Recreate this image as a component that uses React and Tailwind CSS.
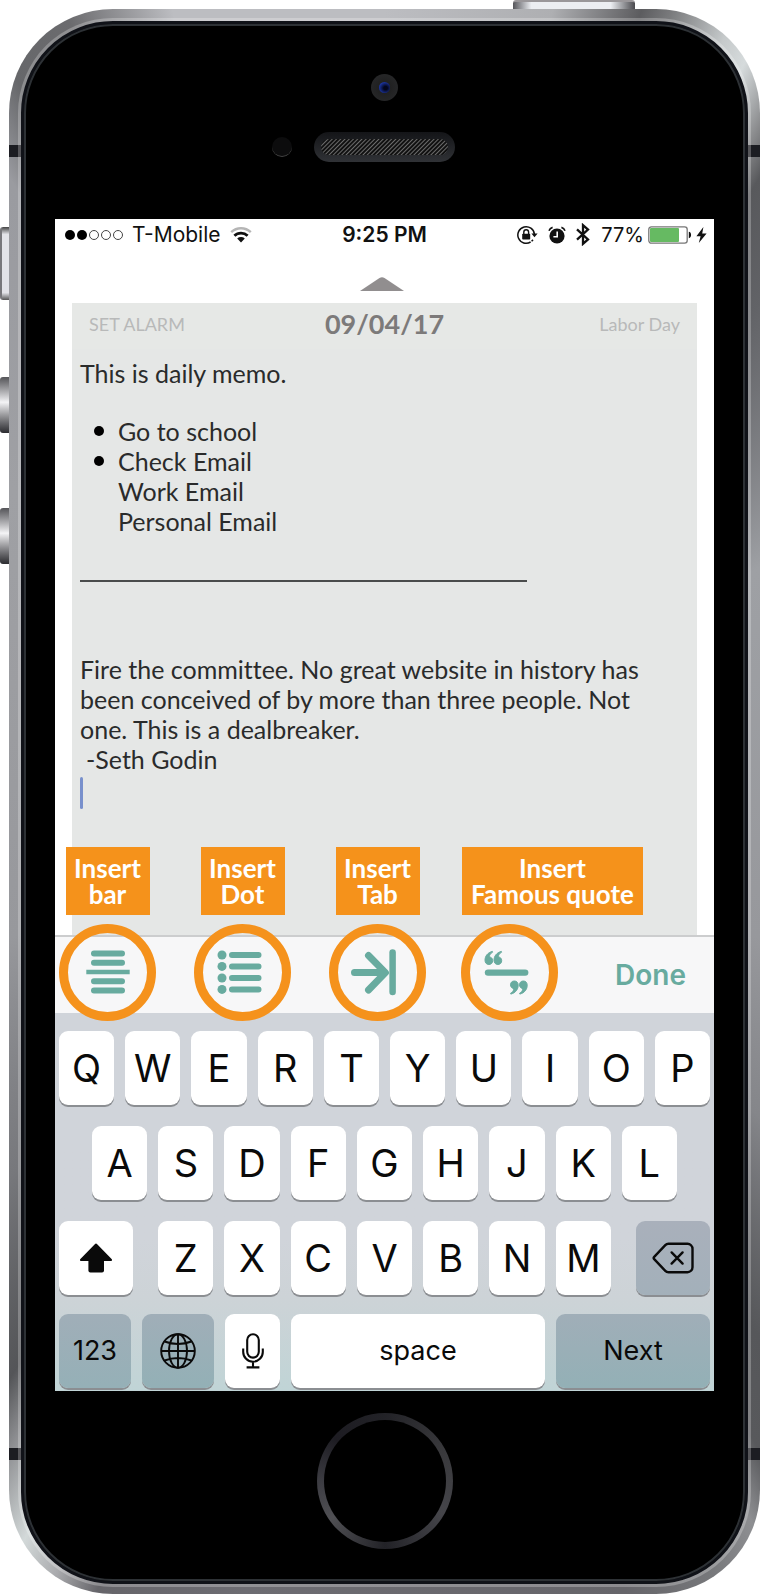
import React from "react";

const svgBase = { fill: "none", stroke: "currentColor", "aria-hidden": true };

function WifiIcon() {
  return (
    <svg {...svgBase} viewBox="0 0 22 17" className="h-[17px] w-[22px]" strokeWidth="2.4">
      <path d="M1.2 6.2a14 14 0 0 1 19.6 0" stroke="#b5b5b5" />
      <path d="M4.4 9.8a9.4 9.4 0 0 1 13.2 0" strokeWidth="2.8" />
      <path d="M7.2 12.4a5.6 5.6 0 0 1 7.6 0L11 16.6z" fill="currentColor" stroke="none" />
    </svg>
  );
}

function RotationLockIcon() {
  return (
    <svg {...svgBase} viewBox="0 0 21 20" className="h-[20px] w-[21px]">
      <path d="M17.4 9.2A8.3 8.3 0 1 0 13.6 17" strokeWidth="1.5" />
      <path d="M14.6 16.3l1.4-1.4" strokeWidth="1.5" />
      <path d="M14.4 8.6h6.2l-3.1 3.6z" fill="currentColor" stroke="none" />
      <rect x="5.2" y="8.8" width="8" height="5.8" rx=".8" fill="currentColor" stroke="none" />
      <path d="M6.8 9V7.2a2.4 2.4 0 0 1 4.8 0V9" strokeWidth="1.4" />
    </svg>
  );
}

function AlarmIcon() {
  return (
    <svg {...svgBase} viewBox="0 0 18 18" className="h-[18px] w-[18px]">
      <circle cx="9" cy="10" r="7.6" fill="currentColor" stroke="none" />
      <path d="M9.2 5.6v5.2H5.4" stroke="#fff" strokeWidth="1.6" />
      <path d="M1 4.8A5 5 0 0 1 4.6 1.4M17 4.8a5 5 0 0 0-3.6-3.4" strokeWidth="1.6" />
    </svg>
  );
}

function BluetoothIcon() {
  return (
    <svg {...svgBase} viewBox="0 0 14 23" className="h-[23px] w-[14px]" strokeWidth="2.3">
      <path d="M1 6.4l11 10L7 20.8V2.2l5 4.400-11 10" />
    </svg>
  );
}

function BatteryIcon() {
  return (
    <svg {...svgBase} viewBox="0 0 44 18" className="h-[18px] w-[44px]">
      <rect x=".8" y=".8" width="38.4" height="16.4" rx="2.6" stroke="#777" strokeWidth="1.3" />
      <rect x="2" y="2" width="29" height="14" rx="1" fill="#66ba62" stroke="none" />
      <path d="M40.8 5.8c3 .4 3 6 0 6.4z" fill="#111" stroke="none" />
    </svg>
  );
}

function BoltIcon() {
  return (
    <svg {...svgBase} viewBox="0 0 11 16" className="h-[16px] w-[11px]">
      <path d="M7.4 0L.4 9.2h4.2L2.8 16l7.8-9.6H6.2z" fill="currentColor" stroke="none" />
    </svg>
  );
}

const toolSvg = {
  ...svgBase,
  viewBox: "-32 -32 64 64",
  className: "size-16 shrink-0",
  strokeLinecap: "round",
  strokeLinejoin: "round",
};

function BarIcon() {
  return (
    <svg {...toolSvg} strokeWidth="6">
      <path d="M-14-18.5h28M-14-9.2h28M-14 9.2h28M-14 18.5h28" />
      <path d="M-21.7 0h43.4" strokeWidth="4.4" strokeLinecap="butt" />
    </svg>
  );
}

function DotIcon() {
  return (
    <svg {...toolSvg} strokeWidth="6">
      <path d="M-11-17H15.500M-11-5.600H15.500M-11 6H15.500M-11 17.400H15.500" />
      <g fill="currentColor" stroke="none">
        <circle cx="-21" cy="-17" r="4.500" />
        <circle cx="-21" cy="-5.600" r="4.500" />
        <circle cx="-21" cy="6" r="4.500" />
        <circle cx="-21" cy="17.400" r="4.500" />
      </g>
    </svg>
  );
}

function TabIcon() {
  return (
    <svg {...toolSvg} strokeWidth="7">
      <path d="M-23.500.6H7M-9.500-16.500L7.400.6-9.500 18" />
      <path d="M14.600-19.500v39.500" strokeWidth="6.500" />
    </svg>
  );
}

function QuoteIcon() {
  const mark = "M7 0C2.600 1.200 0 4.600 0 8.800 0 11.400 1.600 13 3.900 13S7.700 11.400 7.700 9.200 6.200 5.500 4.200 5.400C4.600 3.400 5.600 1.700 7.400.8z";
  return (
    <svg {...toolSvg} strokeWidth="6.400">
      <path d="M-22 .6H15.200" />
      <g fill="currentColor" stroke="currentColor" strokeWidth="1">
        <path d={mark} transform="translate(-25 -20.500)" />
        <path d={mark} transform="translate(-16 -20.500)" />
        <path d={mark} transform="translate(8.200 22) rotate(180)" />
        <path d={mark} transform="translate(17.200 22) rotate(180)" />
      </g>
    </svg>
  );
}

function ShiftIcon() {
  return (
    <svg {...svgBase} viewBox="0 0 34 30" className="h-[30px] w-[34px]">
      <path d="M15.800 1.200a1.600 1.600 0 0 1 2.400 0L32.600 16c.9 1 .4 2-1 2H25v9.400a2 2 0 0 1-2 2H11.400a2 2 0 0 1-2-2V18H2.400c-1.400 0-1.900-1-1-2z" fill="currentColor" stroke="none" />
    </svg>
  );
}

function DeleteIcon() {
  return (
    <svg {...svgBase} viewBox="0 0 42 32" className="h-[32px] w-[42px]" strokeWidth="2.400" strokeLinejoin="round" strokeLinecap="round">
      <path d="M16.500 1.800h19a5 5 0 0 1 5 5v18.400a5 5 0 0 1-5 5h-19a4.500 4.500 0 0 1-3.200-1.400L2.200 17.200a1.800 1.800 0 0 1 0-2.400L13.300 3.200a4.500 4.500 0 0 1 3.200-1.400z" />
      <path d="M19.600 10.400l11 11.200M30.600 10.400l-11 11.200" />
    </svg>
  );
}

function GlobeIcon() {
  return (
    <svg {...svgBase} viewBox="0 0 36 36" className="size-9" strokeWidth="1.900">
      <circle cx="18" cy="18" r="16.800" />
      <ellipse cx="18" cy="18" rx="9" ry="16.800" />
      <path d="M18 1v34M1 18h34M4.500 8.500Q18 13.500 31.500 8.500M4.500 27.500Q18 22.500 31.500 27.500" />
    </svg>
  );
}

function MicIcon() {
  return (
    <svg {...svgBase} viewBox="0 0 22 36" className="h-[36px] w-[22px]" strokeWidth="2.100">
      <rect x="5.200" y="1.200" width="11.600" height="23.400" rx="5.800" />
      <path d="M1.200 15.500v3.400a9.800 9.800 0 0 0 19.600 0v-3.400M11 28.600v5.600M4.600 34.400h12.800" />
    </svg>
  );
}

const keyShape = "flex h-[74px] items-center justify-center rounded-[9px] shadow-[0_2px_0_#8b8e92] text-[#0a0a0a]";

function LetterKey({ letter }) {
  return (
    <button type="button" className={`${keyShape} min-w-0 flex-1 bg-white text-[38px]`}>
      {letter}
    </button>
  );
}

function Keyboard() {
  return (
    <div className="flex flex-col gap-[21px] bg-linear-to-b from-[#d0d4da] from-60% via-[#cdd3d7] via-75% to-[#c0d4d6] px-1 pt-[18px] pb-[3px] font-[Inter,sans-serif]">
      <div className="flex gap-[11px]">
        {[..."QWERTYUIOP"].map((l) => <LetterKey key={l} letter={l} />)}
      </div>
      <div className="flex gap-[11px] px-[33px]">
        {[..."ASDFGHJKL"].map((l) => <LetterKey key={l} letter={l} />)}
      </div>
      <div className="flex gap-[25px]">
        <button type="button" aria-label="Shift" className={`${keyShape} w-[74px] bg-white`}><ShiftIcon /></button>
        <div className="flex flex-1 gap-[11px]">
          {[..."ZXCVBNM"].map((l) => <LetterKey key={l} letter={l} />)}
        </div>
        <button type="button" aria-label="Delete" className={`${keyShape} w-[74px] bg-linear-to-b from-[#a9b0bb] to-[#a3b0ba]`}><DeleteIcon /></button>
      </div>
      <div className="-mt-[2px] flex gap-[11px] text-[27px]">
        <button type="button" className={`${keyShape} w-[72px] bg-linear-to-b from-[#a0aeb8] to-[#95b0b7]`}>123</button>
        <button type="button" aria-label="Next keyboard" className={`${keyShape} w-[72px] bg-linear-to-b from-[#a0aeb8] to-[#93b0b6]`}><GlobeIcon /></button>
        <button type="button" aria-label="Dictate" className={`${keyShape} w-[55px] bg-white`}><MicIcon /></button>
        <button type="button" className={`${keyShape} flex-1 bg-white`}>space</button>
        <button type="button" className={`${keyShape} w-[154px] bg-linear-to-b from-[#a0aeb8] to-[#93b0b6]`}>Next</button>
      </div>
    </div>
  );
}

function StatusBar() {
  return (
    <div className="grid h-[30px] grid-cols-[1fr_auto_1fr] items-center px-[7px] font-[Inter,sans-serif] text-[21px] text-[#111]">
      <div className="flex items-center gap-[9px] pl-[3px]">
        <div className="flex gap-[2px]" role="img" aria-label="Signal 2 of 5">
          <span className="size-[10px] rounded-full bg-black" />
          <span className="size-[10px] rounded-full bg-black" />
          <span className="size-[10px] rounded-full border border-[#444]" />
          <span className="size-[10px] rounded-full border border-[#444]" />
          <span className="size-[10px] rounded-full border border-[#444]" />
        </div>
        <span>T-Mobile</span>
        <span><WifiIcon /></span>
      </div>
      <span className="font-semibold">9:25 PM</span>
      <div className="flex items-center justify-end">
        <RotationLockIcon />
        <span className="pl-[10px]"><AlarmIcon /></span>
        <span className="pl-[10px]"><BluetoothIcon /></span>
        <span className="pl-[11px] pr-[4px] text-[20px]">77%</span>
        <BatteryIcon />
        <span className="pl-1"><BoltIcon /></span>
      </div>
    </div>
  );
}

function Memo() {
  return (
    <section className="mx-[17px] flex-1 bg-[#e5e7e6] font-[Lato,sans-serif]">
      <header className="grid h-[46px] grid-cols-[1fr_auto_1fr] items-center bg-[#e6e8e6] px-[17px] pb-[3px] text-[18px] text-[#b8b9b9]">
        <button type="button" className="justify-self-start">SET ALARM</button>
        <h1 className="text-[27px] font-bold text-[#7c7a7a]">09/04/17</h1>
        <span className="justify-self-end">Labor Day</span>
      </header>
      <div
        role="textbox"
        aria-multiline="true"
        aria-label="Memo"
        contentEditable
        suppressContentEditableWarning
        className="px-[8px] pt-[9px] text-[25px] leading-[30px] text-[#2a2b2b] outline-none [font-variant-ligatures:none]"
      >
        <p>This is daily memo.</p>
        <ul className="mt-7 pl-[38px]">
          <li className="flex items-center"><span className="-ml-6 mr-[14px] size-[10px] rounded-full bg-black" />Go to school</li>
          <li className="flex items-center"><span className="-ml-6 mr-[14px] size-[10px] rounded-full bg-black" />Check Email</li>
          <li>Work Email</li>
          <li>Personal Email</li>
        </ul>
        <hr className="mt-[44px] w-[447px] border-t-2 border-[#4a4c4c]" />
        <p className="mt-[72px]">
          Fire the committee. No great website in history has<br />
          been conceived of by more than three people. Not<br />
          one. This is a dealbreaker.
        </p>
        <p className="pl-[6px]">-Seth Godin</p>
        <span className="mt-[3px] block h-8 w-[3px] rounded-sm bg-[#7890cc]" />
      </div>
    </section>
  );
}

const ringButton = "relative flex size-[97px] shrink-0 items-center justify-center rounded-full border-[9px] border-[#f5921c]";
const tagBase = "absolute bottom-full mb-[18px] bg-[#f5921b] py-2 text-center text-[26px] leading-[26px] font-bold whitespace-nowrap text-white font-[Lato,sans-serif]";
const tag = `${tagBase} w-[84px]`;

function Toolbar() {
  return (
    <div className="flex h-[78px] items-center justify-between border-t-2 border-[#cccdce] bg-[#f7f7f8] pr-7 pl-1 text-[#68ab9f]">
      <div className="mb-[6px] flex gap-[38px]">
        <button type="button" className={ringButton}>
          <span className={tag}>Insert<br />bar</span>
          <BarIcon />
        </button>
        <button type="button" className={ringButton}>
          <span className={tag}>Insert<br />Dot</span>
          <DotIcon />
        </button>
        <button type="button" className={ringButton}>
          <span className={tag}>Insert<br />Tab</span>
          <TabIcon />
        </button>
        <button type="button" className={`${ringButton} -ml-[3px]`}>
          <span className={`${tagBase} -left-2 w-[181px]`}>Insert<br />Famous quote</span>
          <QuoteIcon />
        </button>
      </div>
      <button type="button" className="font-[Inter,sans-serif] text-[28px] font-semibold">Done</button>
    </div>
  );
}

function PhoneHardware() {
  const band = "absolute h-3 w-3 bg-[#1c1d22]";
  const volume = "absolute -left-[9px] h-14 w-[9px] rounded-l-[3px] bg-linear-to-b from-[#555559] via-[#f4f4f6] via-45% to-[#2c2c30]";
  return (
    <>
      <span className={`${band} top-[136px] left-0`} />
      <span className={`${band} top-[136px] right-0`} />
      <span className={`${band} bottom-[134px] left-0`} />
      <span className={`${band} right-0 bottom-[134px]`} />
      <span className="absolute top-[218px] -left-[9px] h-[73px] w-[9px] rounded-l-[3px] border-l-2 border-[#77777b] bg-[linear-gradient(#444,#e2e3e8_10%,#e2e3e8_90%,#555)]" />
      <span className={`${volume} top-[368px]`} />
      <span className={`${volume} top-[499px]`} />
      <span className="absolute -top-[9px] right-[125px] h-[9px] w-[122px] rounded-t-[3px] border-t-2 border-[#9a979a] bg-[linear-gradient(90deg,#55555a,#eceef2_15%,#eceef2_80%,#4a4a4e)]" />
    </>
  );
}

export default function App() {
  return (
    <div className="min-h-screen bg-white pt-[9px] pl-[9px]">
      <div className="relative rounded-[104px] bg-[conic-gradient(#bcbdc1_0deg,#aeafb2_12deg,#5c5c5f_18deg,#7a7b7d_20deg,#c6cacb_24deg,#d6dbdc_26deg,#8a8b8d_29deg,#58595c_31deg,#626367_37deg,#9ea0a4_58deg,#97989c_110deg,#85868a_130deg,#56575a_145deg,#58595c_150deg,#8e8f92_153deg,#77787b_157deg,#66656a_163deg,#6d6c72_190deg,#66656a_200deg,#a9aaad_203deg,#d3d9d9_206deg,#8e8f92_210deg,#545558_213deg,#77787c_225deg,#97989c_250deg,#9fa0a4_310deg,#9a9ba0_329deg,#66676a_333deg,#6b6b6e_338deg,#bcbdc1_345deg,#bcbdc1_360deg)] px-[9px] pt-[9px] pb-[7px]">
        <PhoneHardware />
        <div className="relative rounded-[95px] bg-white/25 p-[3px]">
          <div className="rounded-[92px] border-[3px] border-[#101218] bg-black">
            <div className="rounded-[89px] border-2 border-[#2d3135] px-[29px]">
              <div className="flex h-[193px] flex-col items-center gap-[31px] pt-[48px]">
                <div className="flex size-[27px] items-center justify-center rounded-full bg-radial from-[#1c1c1c] to-[#2a2b2d]">
                  <span className="size-[11px] rounded-full bg-radial-[at_60%_55%] from-[#03061c] from-20% to-[#2a50f0]" />
                </div>
                <div className="flex items-center gap-[22px] pr-[42px]">
                  <span className="size-5 rounded-full border-b border-[#444] bg-[#0c0c0d]" />
                  <div className="rounded-full bg-linear-to-b from-[#141518] to-[#303236] p-[7px]">
                    <div className="h-4 w-[127px] rounded-full bg-[repeating-linear-gradient(135deg,#111_0px,#111_1px,#6b6b6b_2px,#111_3px)]" />
                  </div>
                </div>
              </div>
              <main className="flex flex-col bg-white">
                <StatusBar />
                <button type="button" aria-label="Collapse" className="mt-7 mb-3 flex justify-center">
                  <svg viewBox="0 0 44 14" className="mr-[5px] h-[14px] w-[44px]" aria-hidden="true">
                    <path d="M19.500 1Q22-.6 24.500 1L44 14H0z" fill="#918e8f" />
                  </svg>
                </button>
                <div className="flex min-h-[632px] flex-col">
                  <Memo />
                </div>
                <Toolbar />
                <Keyboard />
              </main>
              <div className="flex h-[188px] justify-center pt-[22px]">
                <button type="button" aria-label="Home" className="size-[136px] rounded-full bg-[conic-gradient(#222227,#38383b_60deg,#45454a_120deg,#222227_180deg,#505054_235deg,#3c3c42_270deg,#1d1c22_310deg,#222227)] p-[7px]">
                  <span className="block size-full rounded-full bg-black" />
                </button>
              </div>
            </div>
          </div>
        </div>
      </div>
    </div>
  );
}
